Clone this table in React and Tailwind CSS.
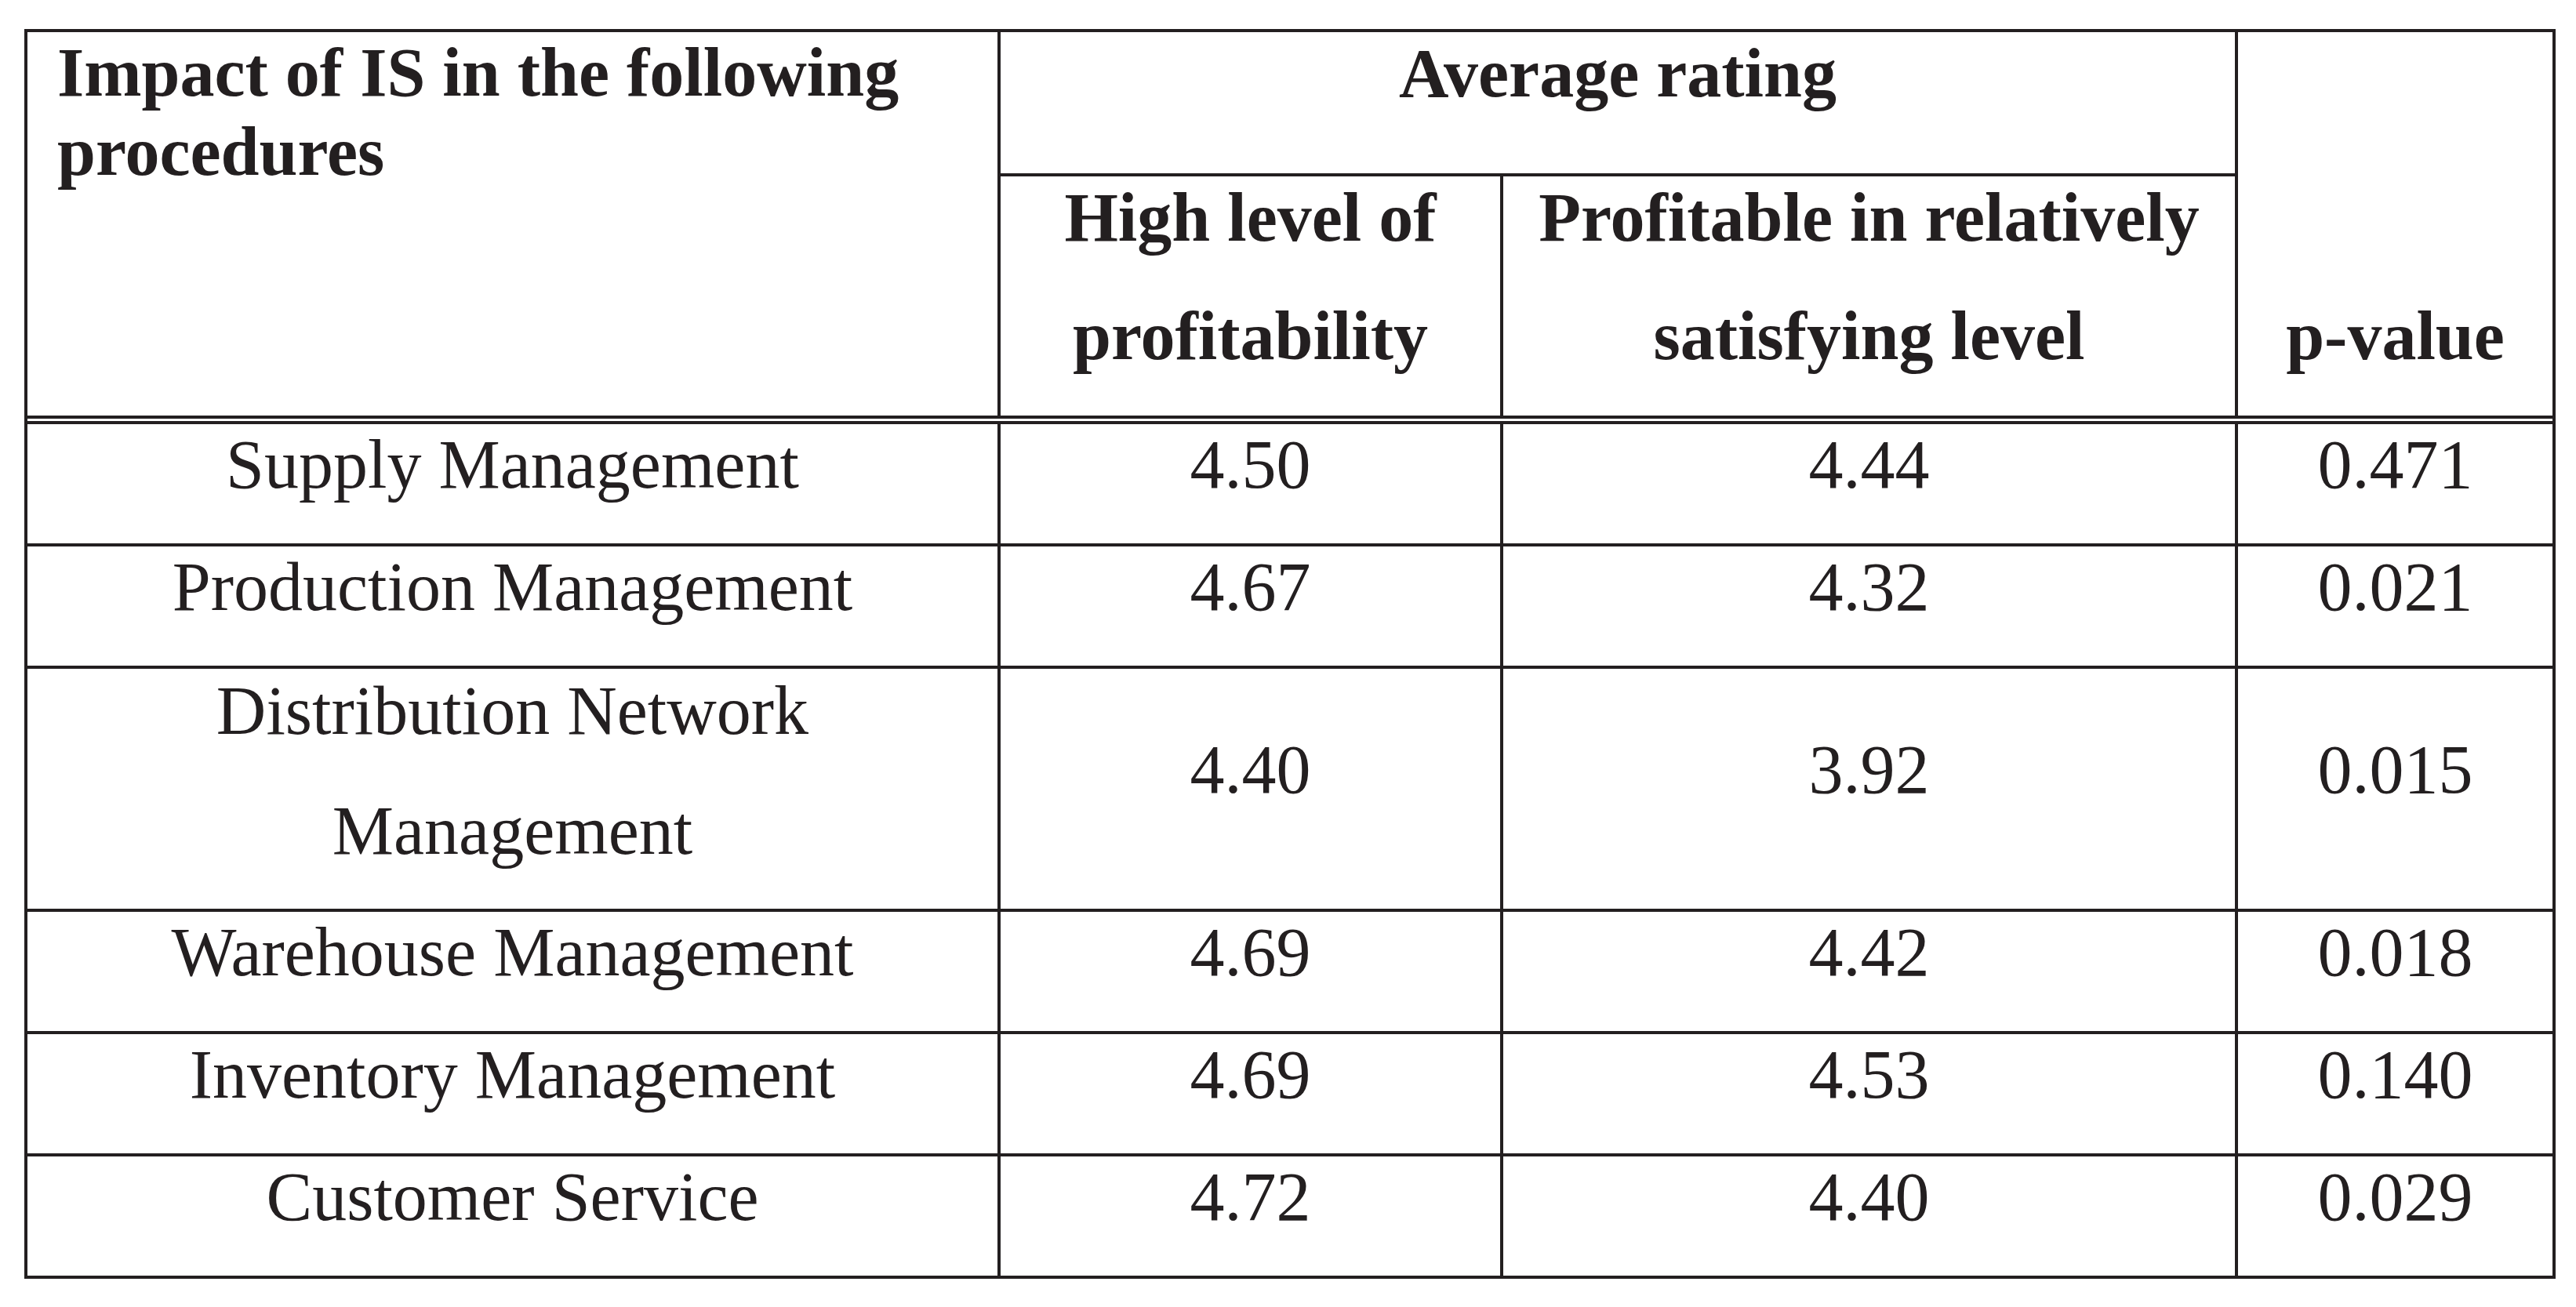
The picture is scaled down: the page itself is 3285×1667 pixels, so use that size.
import React from 'react';

const rows = [
  { label: ['Supply Management'], high: '4.50', fair: '4.44', p: '0.471' },
  { label: ['Production Management'], high: '4.67', fair: '4.32', p: '0.021' },
  { label: ['Distribution Network', 'Management'], high: '4.40', fair: '3.92', p: '0.015' },
  { label: ['Warehouse Management'], high: '4.69', fair: '4.42', p: '0.018' },
  { label: ['Inventory Management'], high: '4.69', fair: '4.53', p: '0.140' },
  { label: ['Customer Service'], high: '4.72', fair: '4.40', p: '0.029' },
];

// one printed line: 101px of text inside a 152px slot (1.5 line spacing)
const Line = ({ children }) => (
  <div className="h-[152px] pt-[1px] leading-[101px] whitespace-nowrap">{children}</div>
);

const NumCell = ({ value, last }) => (
  <div className={`flex flex-col justify-center text-center ${last ? '' : 'border-r-4 border-[#231f20]'}`}>
    <Line>{value}</Line>
  </div>
);

const App = () => {
  return (
    <div className="w-[3285px] h-[1667px] bg-white pt-[37px] pl-[31px]">
      <div className="w-[3228px] border-4 border-[#231f20] text-[#231f20] font-['Liberation_Serif',_'Times_New_Roman',_serif] text-[88px]">
        {/* Header */}
        <div className="grid grid-cols-[1241px_641px_937px_401px] h-[493px] border-b-4 border-[#231f20] font-bold leading-[101px]">
          <div className="border-r-4 border-[#231f20] pt-[1px] pl-[38px] whitespace-nowrap">
            <div>Impact of IS in the following</div>
            <div>procedures</div>
          </div>

          <div className="col-span-2 flex flex-col border-r-4 border-[#231f20]">
            <div className="h-[184px] border-b-4 border-[#231f20] pt-[2px] text-center">Average rating</div>
            <div className="flex-1 grid grid-cols-[641px_933px]">
              <div className="border-r-4 border-[#231f20] pt-[2px] text-center whitespace-nowrap">
                <div>High level of</div>
                <div className="mt-[50px]">profitability</div>
              </div>
              <div className="pt-[2px] text-center whitespace-nowrap">
                <div>Profitable in relatively</div>
                <div className="mt-[50px]">satisfying level</div>
              </div>
            </div>
          </div>

          <div className="pt-[337px] text-center">p-value</div>
        </div>

        {/* double rule under the header */}
        <div className="h-[3px]" />

        {/* Body */}
        <div className="border-t-4 border-[#231f20]">
          {rows.map((r, i) => (
            <div
              key={r.label[0]}
              className={`grid grid-cols-[1241px_641px_937px_401px] ${i < rows.length - 1 ? 'border-b-4 border-[#231f20]' : ''}`}
            >
              <div className="border-r-4 border-[#231f20] text-center">
                {r.label.map((l, j) => (
                  <div key={j} className={r.label.length > 1 ? 'h-[153px] pt-[3px] leading-[101px]' : 'h-[152px] pt-[1px] leading-[101px]'}>
                    {l}
                  </div>
                ))}
              </div>
              <NumCell value={r.high} />
              <NumCell value={r.fair} />
              <NumCell value={r.p} last />
            </div>
          ))}
        </div>
      </div>
    </div>
  );
};

export default App;
